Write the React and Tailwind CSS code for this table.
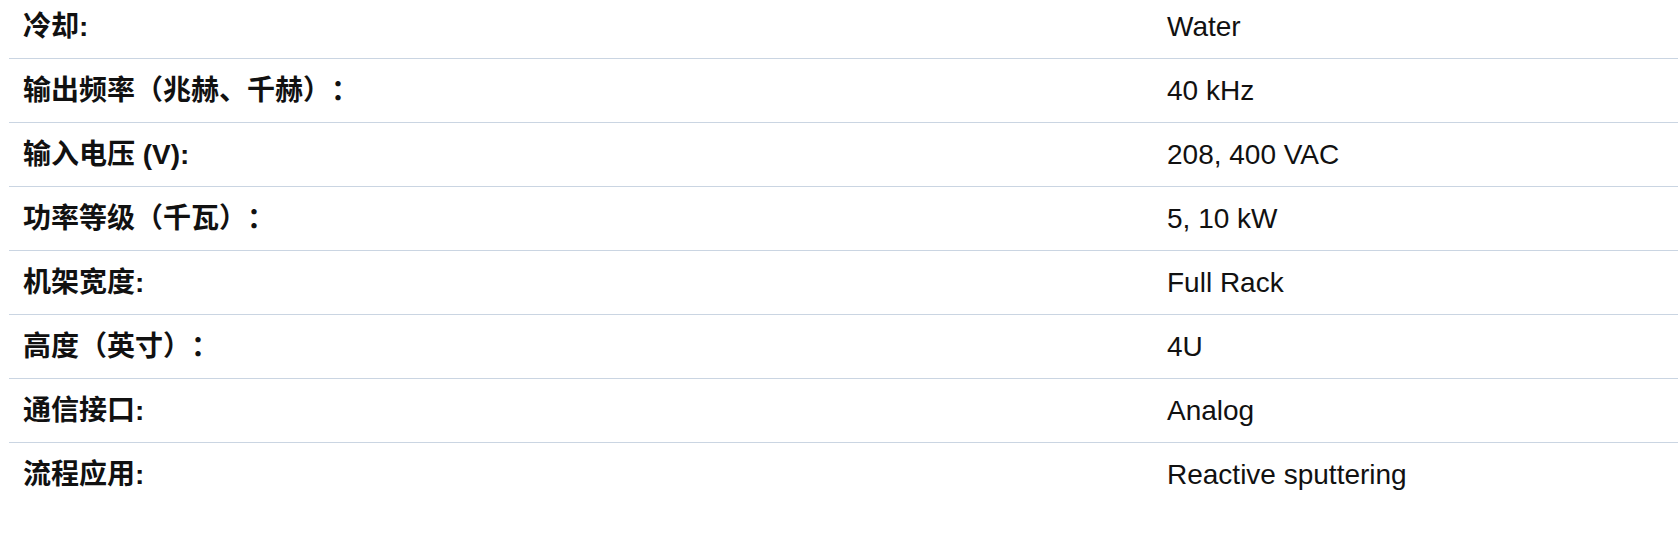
import React from 'react';

const specs = [
  { label: '冷却:', value: 'Water' },
  { label: '输出频率（兆赫、千赫）：', value: '40 kHz' },
  { label: '输入电压 (V):', value: '208, 400 VAC' },
  { label: '功率等级（千瓦）：', value: '5, 10 kW' },
  { label: '机架宽度:', value: 'Full Rack' },
  { label: '高度（英寸）：', value: '4U' },
  { label: '通信接口:', value: 'Analog' },
  { label: '流程应用:', value: 'Reactive sputtering' },
];

const App = () => {
  return (
    <div
      className="bg-white w-[1678px] h-[535px] overflow-hidden pl-[9px] [text-spacing-trim:space-all]"
      style={{ fontFamily: '"Liberation Sans", "Noto Sans CJK SC", Arial, sans-serif' }}
    >
      <div className="-mt-[5px]">
        {specs.map((row, i) => (
          <div
            key={row.label}
            className={`flex items-center h-[64px] text-[#111111] text-[28px] ${
              i < specs.length - 1 ? 'border-b border-[#cad5e2]' : ''
            }`}
          >
            <div className="w-[1158px] pl-[14px] font-bold">{row.label}</div>
            <div className="flex-1">{row.value}</div>
          </div>
        ))}
      </div>
    </div>
  );
};

export default App;
